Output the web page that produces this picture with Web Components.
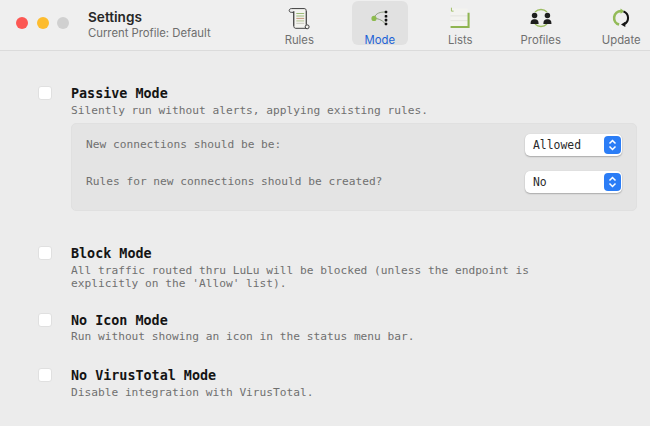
<!DOCTYPE html>
<html>
<head>
<meta charset="utf-8">
<title>Settings</title>
<style>
    html, body { margin: 0; padding: 0; }
    body {
        width: 650px;
        height: 426px;
        overflow: hidden;
        background: #ececec;
        font-family: "DejaVu Sans Mono", "Liberation Mono", monospace;
    }
</style>
</head>
<body>
<settings-window>
    <title-bar slot="bar">
        <toolbar-tab label="Rules" icon="rules"></toolbar-tab>
        <toolbar-tab label="Mode" icon="mode" active></toolbar-tab>
        <toolbar-tab label="Lists" icon="lists"></toolbar-tab>
        <toolbar-tab label="Profiles" icon="profiles"></toolbar-tab>
        <toolbar-tab label="Update" icon="update"></toolbar-tab>
    </title-bar>

    <mode-option heading="Passive Mode">
        Silently run without alerts, applying existing rules.
        <option-panel slot="extra">
            <panel-row text="New connections should be be:" value="Allowed"></panel-row>
            <panel-row text="Rules for new connections should be created?" value="No"></panel-row>
        </option-panel>
    </mode-option>
    <mode-option heading="Block Mode" style="--gap-top: 35px">
        All traffic routed thru LuLu will be blocked (unless the endpoint is<br>explicitly on the 'Allow' list).
    </mode-option>
    <mode-option heading="No Icon Mode" style="--gap-top: 23px; --desc-top: 1px">
        Run without showing an icon in the status menu bar.
    </mode-option>
    <mode-option heading="No VirusTotal Mode" style="--gap-top: 25px">
        Disable integration with VirusTotal.
    </mode-option>
</settings-window>

<script>
class SettingsWindow extends HTMLElement {
    constructor() {
        super();
        this.attachShadow({mode: 'open'}).innerHTML = `
            <style>
                :host { display: block; width: 650px; height: 426px; }
                main { display: block; padding: 35px 13px 0 38px; }
            </style>
            <slot name="bar"></slot>
            <main><slot></slot></main>
        `;
    }
}

class TitleBar extends HTMLElement {
    constructor() {
        super();
        this.attachShadow({mode: 'open'}).innerHTML = `
            <style>
                :host {
                    display: flex;
                    height: 50px;
                    background: #efefef;
                    border-bottom: 1px solid #dbdbdb;
                    font-family: "Inter", "Liberation Sans", sans-serif;
                }
                .lights { display: flex; gap: 8.500px; padding: 17px 0 0 16px; width: 72px; flex: none; }
                .lights i { display: block; width: 12px; height: 12px; border-radius: 50%; }
                .title { width: 171px; flex: none; padding-top: 9px; }
                h1 { margin: 0; font-size: 13.600px; line-height: 16px; font-weight: 600; color: #262626; }
                p { margin: 0; font-size: 11.300px; line-height: 16px; color: #6d6d6d; }
                nav { display: flex; }
            </style>
            <div class="lights">
                <i style="background:#fc5753"></i>
                <i style="background:#fdbc2e"></i>
                <i style="background:#d0d0d0"></i>
            </div>
            <div class="title">
                <h1>Settings</h1>
                <p>Current Profile: Default</p>
            </div>
            <nav><slot></slot></nav>
        `;
    }
}

const ICONS = {
    rules: `
        <g transform="translate(.5 -1) scale(1.15)">
        <path d="M4 3.5h13c1.500 0 2 1 2 2v14" fill="#f4f4f0" stroke="#3c3c3c" stroke-width="1"/>
        <path d="M6.500 7v14.500c0 1.300 1 2 2 2h11.500" fill="#f4f4f0" stroke="#3c3c3c" stroke-width="1"/>
        <path d="M4 3.500c-1.400 0-2.200 1-2.200 2s.8 1.800 2.200 1.800h2.500" fill="none" stroke="#3c3c3c" stroke-width="1"/>
        <rect x="6.900" y="6" width="12" height="15" fill="#f4f4f0"/>
        <path d="M6.500 6v15M19 6v14" stroke="#3c3c3c" stroke-width="1"/>
        <path d="M9 8.500h8M9 11h8" stroke="#9cbb78" stroke-width="1.200"/>
        <path d="M9 13.500h8" stroke="#c9a088" stroke-width="1.200"/>
        <path d="M9 16h8" stroke="#b9c79b" stroke-width="1.200"/>
        <path d="M9 18.500h8" stroke="#cfcfc6" stroke-width="1.200"/>
        <circle cx="20" cy="22" r="2" fill="#f4f4f0" stroke="#3c3c3c" stroke-width="1"/>
        </g>
    `,
    mode: `
        <path d="M7 14C9 8 15 7 20 7M7 14c4 1 9 1.500 13 6.500" fill="none" stroke="#8b9a7b" stroke-width="1.100"/>
        <circle cx="7" cy="14.500" r="3" fill="#8dbb4e"/>
        <rect x="19.500" y="5.500" width="3" height="3" rx=".8" fill="#111"/>
        <rect x="19.500" y="10.500" width="3" height="3" rx=".8" fill="#111"/>
        <rect x="19.500" y="15" width="3" height="3" rx=".8" fill="#111"/>
        <rect x="19.500" y="19.500" width="3" height="3" rx=".8" fill="#111"/>
    `,
    lists: `
        <path d="M3 3h20v21H3z" fill="#f3f3ef"/>
        <path d="M3 11.500h20M3 17h20" stroke="#e1e1dc" stroke-width="1"/>
        <path d="M4 2v4h2.500" fill="none" stroke="#9cbc62" stroke-width="1.100"/>
        <path d="M24 8v16.500H3" fill="none" stroke="#8fb550" stroke-width="2.400"/>
    `,
    profiles: `
        <path d="M7 7A10 10 0 0 1 21 7M7 21A10 10 0 0 0 21 21" fill="none" stroke="#9dbd62" stroke-width="1.600"/>
        <circle cx="6.500" cy="11" r="3.200" fill="#1e1e1e"/>
        <path d="M1.800 21c0-4.500 1.800-5.500 4.700-5.500s4.700 1 4.700 5.500z" fill="#1e1e1e"/>
        <circle cx="21.500" cy="11" r="3.200" fill="#1e1e1e"/>
        <path d="M16.800 21c0-4.500 1.800-5.500 4.700-5.500s4.700 1 4.700 5.500z" fill="#1e1e1e"/>
    `,
    update: `
        <path d="M14 6A8 8 0 0 0 11.800 21.700" fill="none" stroke="#93bb58" stroke-width="3"/>
        <path d="M13.500 3l4.500 3-4.500 3z" fill="#93bb58"/>
        <path d="M17 6.500A8 8 0 0 1 17.500 21.300" fill="none" stroke="#141414" stroke-width="2.400"/>
        <path d="M19 24.500L14 21.500l5-3z" fill="#141414"/>
    `,
};

class ToolbarTab extends HTMLElement {
    constructor() {
        super();
        const icon = ICONS[this.getAttribute('icon')] || '';
        this.attachShadow({mode: 'open'}).innerHTML = `
            <style>
                :host {
                    display: flex;
                    justify-content: center;
                    width: 80.500px;
                    height: 50px;
                    font-size: 11.300px;
                    color: #6f6f6f;
                }
                :host([active]) { color: #1d63d6; }
                .box {
                    box-sizing: border-box;
                    width: 56px;
                    height: 44px;
                    margin-top: 1px;
                    padding-top: 5px;
                    border-radius: 6px;
                    text-align: center;
                }
                :host([active]) .box { background: #e1e1e1; }
                svg { display: block; margin: 0 auto; }
                span { display: block; line-height: 14px; margin-top: 3px; white-space: nowrap; }
            </style>
            <div class="box">
                <svg width="24" height="24" viewBox="0 0 28 28">${icon}</svg>
                <span>${this.getAttribute('label')}</span>
            </div>
        `;
    }
}

class ModeOption extends HTMLElement {
    constructor() {
        super();
        this.attachShadow({mode: 'open'}).innerHTML = `
            <style>
                :host {
                    display: grid;
                    grid-template-columns: 14px 1fr;
                    column-gap: 19px;
                    padding-top: var(--gap-top, 0);
                }
                .check {
                    width: 14px;
                    height: 14px;
                    box-sizing: border-box;
                    background: #fff;
                    border: 1px solid #e0e0e0;
                    border-radius: 3px;
                }
                h2 {
                    margin: 0;
                    font-size: 13.400px;
                    line-height: 16px;
                    font-weight: 700;
                    color: #141414;
                    font-family: inherit;
                }
                p {
                    margin: var(--desc-top, 2px) 0 0;
                    font-size: 11.200px;
                    line-height: 13px;
                    color: #707070;
                }
            </style>
            <div class="check"></div>
            <div>
                <h2>${this.getAttribute('heading')}</h2>
                <p><slot></slot></p>
                <slot name="extra"></slot>
            </div>
        `;
    }
}

class OptionPanel extends HTMLElement {
    constructor() {
        super();
        this.attachShadow({mode: 'open'}).innerHTML = `
            <style>
                :host {
                    display: flex;
                    flex-direction: column;
                    gap: 15px;
                    box-sizing: border-box;
                    height: 88px;
                    margin-top: 6px;
                    padding: 10px 14px 0;
                    background: #e4e4e4;
                    border: 1px solid #e0e0e0;
                    border-radius: 5px;
                }
            </style>
            <slot></slot>
        `;
    }
}

class PanelRow extends HTMLElement {
    constructor() {
        super();
        this.attachShadow({mode: 'open'}).innerHTML = `
            <style>
                :host {
                    display: flex;
                    align-items: center;
                    justify-content: space-between;
                    height: 22px;
                    font-size: 11.200px;
                    color: #707070;
                }
                .label { position: relative; top: -1px; }
                .select {
                    box-sizing: border-box;
                    display: flex;
                    align-items: center;
                    justify-content: space-between;
                    width: 97px;
                    height: 22px;
                    padding: 0 1px 0 8px;
                    background: #fff;
                    border-radius: 5px;
                    box-shadow: 0 1px 1.500px rgba(0,0,0,.25), 0 0 1px rgba(0,0,0,.12);
                    font-size: 11.400px;
                    color: #2a2a2a;
                }
                .stepper {
                    display: block;
                    width: 17px;
                    height: 18px;
                    background: #2b7df6;
                    border-radius: 4px;
                }
            </style>
            <span class="label">${this.getAttribute('text')}</span>
            <div class="select">
                <span>${this.getAttribute('value')}</span>
                <svg class="stepper" viewBox="0 0 17 18">
                    <path d="M5.500 7.500L8.500 4.500l3 3M5.500 10.500l3 3 3-3" fill="none" stroke="#fff" stroke-width="1.500"/>
                </svg>
            </div>
        `;
    }
}

window.customElements.define('settings-window', SettingsWindow);
window.customElements.define('title-bar', TitleBar);
window.customElements.define('toolbar-tab', ToolbarTab);
window.customElements.define('mode-option', ModeOption);
window.customElements.define('option-panel', OptionPanel);
window.customElements.define('panel-row', PanelRow);
</script>
</body>
</html>
